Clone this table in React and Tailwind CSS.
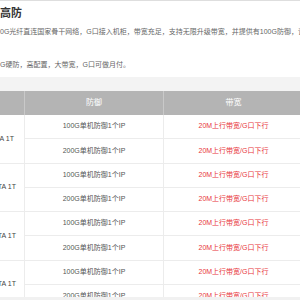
import React from "react";

const font = { fontFamily: '"Liberation Sans", "Noto Sans CJK SC", sans-serif' };

function Row({ defense }) {
  return (
    <div className="flex h-[24.25px]">
      <div className="w-[139px] shrink-0 flex items-center justify-center border-r border-b border-[#ececec] text-[7px] text-[#555]">
        {defense}
      </div>
      <div className="w-[139px] shrink-0 flex items-center justify-center border-b border-[#ececec] text-[7px] text-[#e8363b]">
        20M上行带宽/G口下行
      </div>
    </div>
  );
}

function Group({ label, first }) {
  return (
    <div className="flex">
      <div
        className={`w-[25px] shrink-0 overflow-hidden flex items-center justify-end border-r border-b border-[#ececec] text-[7px] text-[#444] whitespace-nowrap ${
          first ? "pr-[10px]" : "pr-[8px]"
        }`}
      >
        {label}
      </div>
      <div className="flex flex-col">
        <Row defense="100G单机防御1个IP" />
        <Row defense="200G单机防御1个IP" />
      </div>
    </div>
  );
}

export default function App() {
  return (
    <div className="w-[300px] h-[300px] overflow-hidden bg-white flex flex-col" style={font}>
      <div className="h-px bg-[#dedede] shrink-0" />
      <div className="h-[76px] shrink-0 whitespace-nowrap overflow-hidden">
        <div className="pt-[6px] text-[11px] font-bold text-[#333] leading-[13px]">高防</div>
        <div className="mt-[7px] text-[7px] text-[#666] leading-[9px]">
          0G光纤直连国家骨干网络，G口接入机柜，带宽充足，支持无限升级带宽，并提供有100G防御，该机房
        </div>
        <div className="mt-[24px] text-[7px] text-[#666] leading-[9px]">G硬防，高配置，大带宽，G口可做月付。</div>
      </div>
      <div className="h-[14px] shrink-0 bg-[#f3f3f3]" />
      <div className="flex-1 overflow-hidden">
        <div className="flex h-[24px] bg-[#b4b4b4] text-[8px] text-white">
          <div className="w-[25px] shrink-0 border-r border-[#c9c9c9]" />
          <div className="w-[139px] shrink-0 flex items-center justify-center border-r border-[#c9c9c9]">防御</div>
          <div className="w-[139px] shrink-0 flex items-center justify-center">带宽</div>
        </div>
        <Group label="ATA 1T" first />
        <Group label="SATA 1T" />
        <Group label="SATA 1T" />
        <Group label="SATA 1T" />
      </div>
      <div className="h-[3px] shrink-0 bg-[#f1f1f1]" />
    </div>
  );
}
